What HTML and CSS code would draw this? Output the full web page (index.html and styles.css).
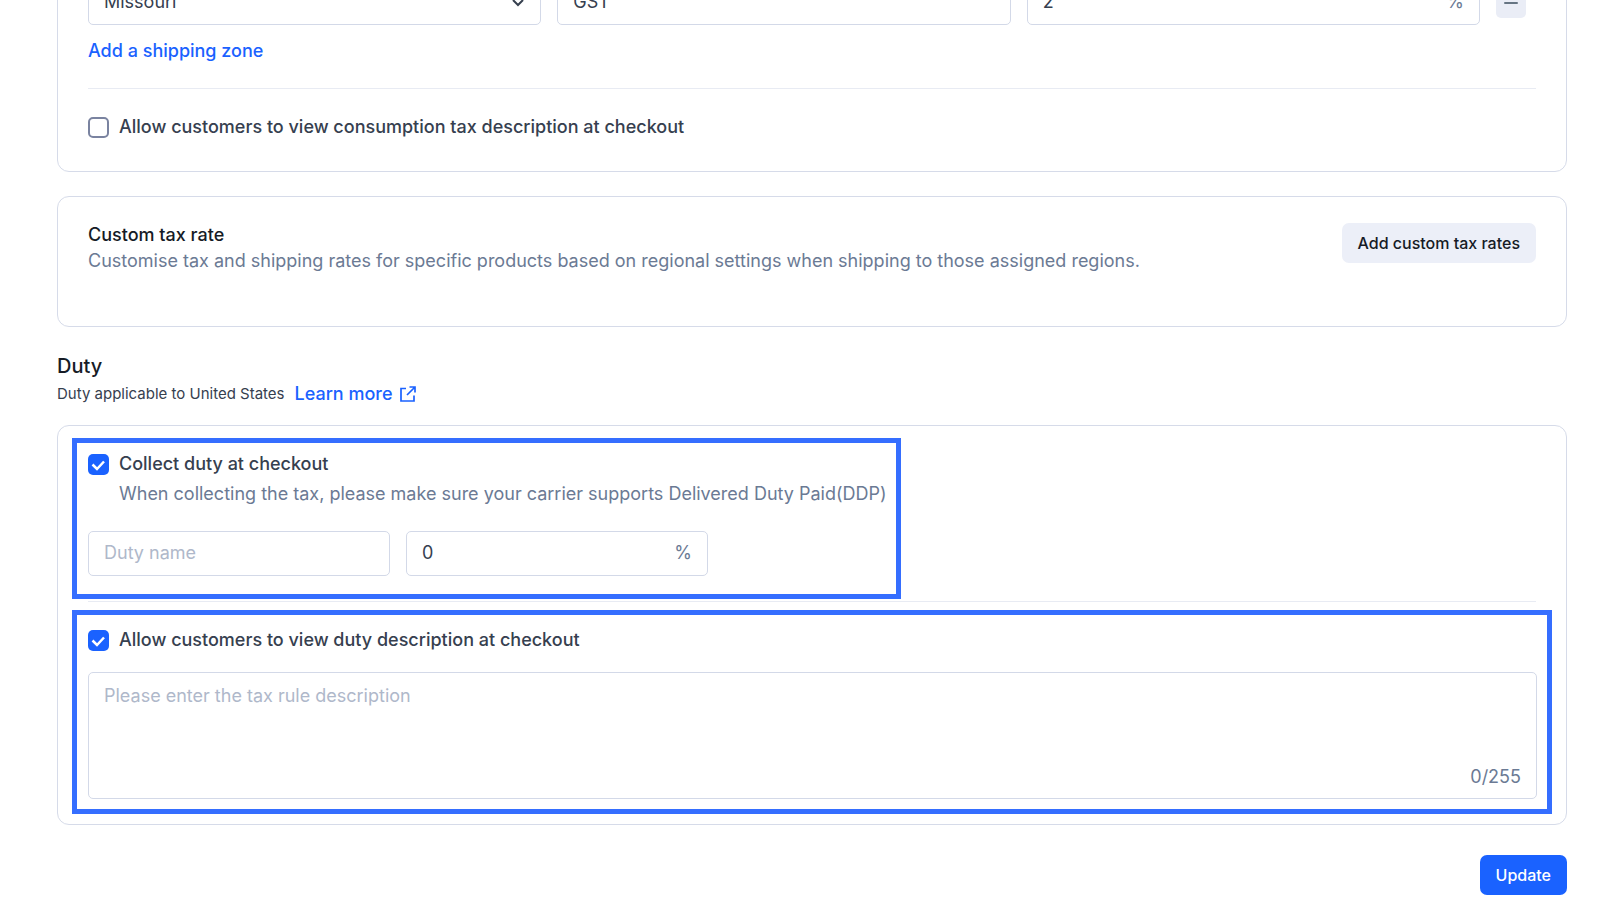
FILE: index.html
```html
<!DOCTYPE html>
<html lang="en">
<head>
<meta charset="UTF-8" />
<meta name="viewport" content="width=device-width, initial-scale=1" />
<title>Tax and duty settings</title>
<link rel="stylesheet" href="styles.css">
</head>
<body>

<main>
  <section class="card card-zones">
    <div class="zone-row">
      <select class="field" aria-label="Shipping zone">
        <option>Missouri</option>
      </select>
      <input class="field" type="text" value="GST" aria-label="Tax name">
      <div class="field affix">
        <input type="text" value="2" aria-label="Tax rate">
        <span>%</span>
      </div>
      <button type="button" class="remove" aria-label="Remove zone">
        <svg width="14" height="14" viewBox="0 0 14 14"><path d="M1 7h12" stroke="#667583" stroke-width="2" stroke-linecap="round"/></svg>
      </button>
    </div>
    <a href="#" class="link add-zone">Add a shipping zone</a>
    <hr>
    <label class="check">
      <input type="checkbox">
      Allow customers to view consumption tax description at checkout
    </label>
  </section>

  <section class="card card-custom">
    <div>
      <h3>Custom tax rate</h3>
      <p class="muted">Customise tax and shipping rates for specific products based on regional settings when shipping to those assigned regions.</p>
    </div>
    <button type="button" class="btn btn-light">Add custom tax rates</button>
  </section>

  <header class="duty-header">
    <h2>Duty</h2>
    <p>
      Duty applicable to United States
      <a href="#" class="link">Learn more
        <svg width="16" height="16" viewBox="0 0 16 16" fill="none" stroke="currentColor" stroke-width="1.700"><path d="M6 2.500H1v12.500h13V9.500"/><path d="M9.500 1h5.500v5.500M14.500 1.500L7 9"/></svg>
      </a>
    </p>
  </header>

  <section class="card card-duty">
    <div class="highlight collect">
      <label class="check">
        <input type="checkbox" checked>
        Collect duty at checkout
      </label>
      <p class="muted">When collecting the tax, please make sure your carrier supports Delivered Duty Paid(DDP)</p>
      <div class="duty-row">
        <input class="field" type="text" placeholder="Duty name" aria-label="Duty name">
        <div class="field affix">
          <input type="text" value="0" aria-label="Duty rate">
          <span>%</span>
        </div>
      </div>
    </div>
    <hr>
    <div class="highlight describe">
      <label class="check">
        <input type="checkbox" checked>
        Allow customers to view duty description at checkout
      </label>
      <div class="textbox">
        <textarea placeholder="Please enter the tax rule description" aria-label="Tax rule description" maxlength="255"></textarea>
        <span class="counter">0/255</span>
      </div>
    </div>
  </section>

  <div class="actions">
    <button type="button" class="btn btn-primary">Update</button>
  </div>
</main>

</body>
</html>
```

FILE: styles.css
```css
* {
  box-sizing: border-box;
}
body {
  font-family: Inter, "Liberation Sans", sans-serif;
  font-size: 18px; line-height: 24px;
  margin: 0; background: #fff; color: #36404f;
  overflow: hidden;
}
main {
  padding: 0 36px 0 57px;
}
h2, h3, p {
  margin: 0;
}
h2, h3 {
  color: #161b26;
  font-weight: 500;
}
h3 {
  font-size: 18px;
}
hr {
  border: none; border-top: 1px solid #e8ebf3;
  margin: 0;
}
input, select, textarea, button {
  font: inherit; color: inherit;
}
.card {
  border: 1px solid #d6dbe9; border-radius: 12px;
  padding: 30px;
}
.link {
  color: #1a62ff; text-decoration: none;
  font-weight: 500;
}
.muted {
  color: #6b7a94;
}

/* fields */
.field {
  height: 45px; min-width: 0;
  padding: 0 15px 2px;
  border: 1px solid #d3d9e8; border-radius: 5px;
  background: #fff;
}
select.field {
  appearance: none;
  background: url("data:image/svg+xml,%3Csvg xmlns='http://www.w3.org/2000/svg' width='12' height='8' fill='none' stroke='%2336404f' stroke-width='2'%3E%3Cpath d='M1 1l5 5 5-5'/%3E%3C/svg%3E") no-repeat right 16px center;
}
.affix {
  display: flex; align-items: center;
}
.affix input {
  flex: 1; min-width: 0;
  border: none; padding: 0; outline: none;
  background: none;
}
.affix span {
  color: #6b7a94;
}
::placeholder {
  color: #afb8ca;
}
.check {
  display: flex; align-items: center; gap: 10px;
  font-weight: 500;
}
.check input {
  appearance: none;
  width: 21px; height: 21px; margin: 0;
  border: 2px solid #7a83a0; border-radius: 5px;
}
.check input:checked {
  border: none;
  background: #1a62ff url("data:image/svg+xml,%3Csvg xmlns='http://www.w3.org/2000/svg' width='21' height='21' fill='none' stroke='white' stroke-width='2.500'%3E%3Cpath d='M4.500 10.500l4.500 4.500 7-7.500'/%3E%3C/svg%3E") center no-repeat;
}

/* buttons */
.btn {
  flex: none;
  border: none; border-radius: 7px;
  padding: 8px 16px;
  font-size: 16px; font-weight: 500;
  cursor: pointer;
}
.btn-light {
  background: #eceff8; color: #161b26;
}
.btn-primary {
  background: #1a62ff; color: #fff;
}
.remove {
  width: 30px; height: 30px; padding: 0;
  display: grid; place-items: center;
  border: none; border-radius: 5px;
  background: #eaedf6;
}

/* consumption tax, scrolled partly out of view */
.card-zones {
  margin-top: -51px;
  padding-bottom: 32px;
}
.zone-row {
  display: flex; align-items: center; gap: 16px;
  padding-right: 10px; margin-bottom: 14px;
}
.zone-row .field {
  flex: 1;
}
.add-zone {
  display: block; width: fit-content;
}
.card-zones hr {
  margin: 25px 0 26px;
}

.card-custom {
  display: flex; justify-content: space-between; align-items: flex-start;
  margin-top: 24px;
  padding: 26px 30px 53px;
}
.card-custom .muted {
  margin-top: 2px;
}

.duty-header {
  margin: 27px 0 19px;
}
.duty-header h2 {
  font-size: 20px;
}
.duty-header p {
  display: flex; align-items: center; gap: 10px;
  margin-top: 4px;
  font-size: 15px;
}
.duty-header .link {
  display: flex; align-items: center; gap: 7px;
  font-size: 18px;
}

.card-duty {
  padding: 12px 14px 10px;
}
.card-duty hr {
  margin: 2px 16px 8px;
}
.highlight {
  border: 5px solid #356eff;
}
.collect {
  width: fit-content;
  padding: 9px 9px 18px 11px;
}
.collect .muted {
  margin: 6px 0 25px 31px;
}
.duty-row {
  display: flex; gap: 16px;
}
.duty-row .field {
  width: 302px;
}
.describe {
  padding: 13px 10px 10px 11px;
}
.textbox {
  margin-top: 20px;
  padding: 11px 15px 9px;
  display: flex; flex-direction: column;
  border: 1px solid #d3d9e8; border-radius: 5px;
}
.textbox textarea {
  height: 81px; padding: 0;
  border: none; outline: none; resize: none;
  background: none;
}
.counter {
  align-self: flex-end;
  color: #6b7a94;
}

.actions {
  display: flex; justify-content: flex-end;
  margin: 30px 0 18px;
}
```
